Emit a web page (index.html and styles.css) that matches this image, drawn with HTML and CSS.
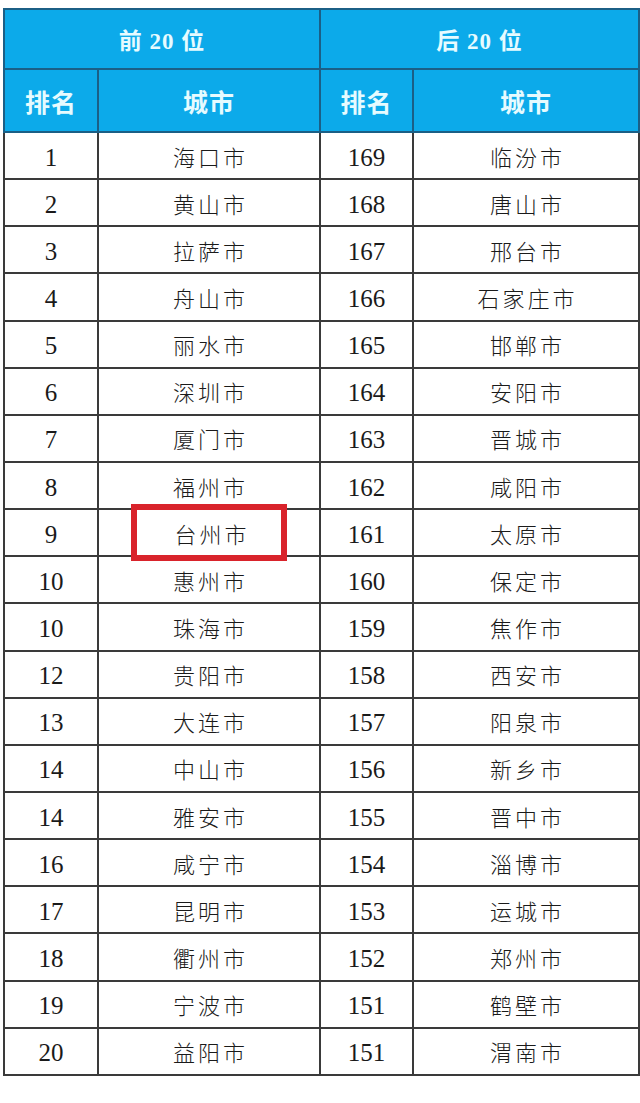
FILE: index.html
```html
<!DOCTYPE html>
<html lang="zh">
<head>
<meta charset="utf-8">
<link rel="stylesheet" href="styles.css">
</head>
<body>
<table class="rank">
  <colgroup>
    <col class="c-rank"><col class="c-city"><col class="c-rank2"><col class="c-city2">
  </colgroup>
  <thead>
    <tr class="h1"><th colspan="2">前 20 位</th><th colspan="2">后 20 位</th></tr>
    <tr class="h2"><th>排名</th><th>城市</th><th>排名</th><th>城市</th></tr>
  </thead>
  <tbody>
    <tr><td class="num">1</td><td class="city">海口市</td><td class="num">169</td><td class="city">临汾市</td></tr>
    <tr><td class="num">2</td><td class="city">黄山市</td><td class="num">168</td><td class="city">唐山市</td></tr>
    <tr><td class="num">3</td><td class="city">拉萨市</td><td class="num">167</td><td class="city">邢台市</td></tr>
    <tr><td class="num">4</td><td class="city">舟山市</td><td class="num">166</td><td class="city">石家庄市</td></tr>
    <tr><td class="num">5</td><td class="city">丽水市</td><td class="num">165</td><td class="city">邯郸市</td></tr>
    <tr><td class="num">6</td><td class="city">深圳市</td><td class="num">164</td><td class="city">安阳市</td></tr>
    <tr><td class="num">7</td><td class="city">厦门市</td><td class="num">163</td><td class="city">晋城市</td></tr>
    <tr><td class="num">8</td><td class="city">福州市</td><td class="num">162</td><td class="city">咸阳市</td></tr>
    <tr><td class="num">9</td><td class="city"><span class="mark">台州市</span></td><td class="num">161</td><td class="city">太原市</td></tr>
    <tr><td class="num">10</td><td class="city">惠州市</td><td class="num">160</td><td class="city">保定市</td></tr>
    <tr><td class="num">10</td><td class="city">珠海市</td><td class="num">159</td><td class="city">焦作市</td></tr>
    <tr><td class="num">12</td><td class="city">贵阳市</td><td class="num">158</td><td class="city">西安市</td></tr>
    <tr><td class="num">13</td><td class="city">大连市</td><td class="num">157</td><td class="city">阳泉市</td></tr>
    <tr><td class="num">14</td><td class="city">中山市</td><td class="num">156</td><td class="city">新乡市</td></tr>
    <tr><td class="num">14</td><td class="city">雅安市</td><td class="num">155</td><td class="city">晋中市</td></tr>
    <tr><td class="num">16</td><td class="city">咸宁市</td><td class="num">154</td><td class="city">淄博市</td></tr>
    <tr><td class="num">17</td><td class="city">昆明市</td><td class="num">153</td><td class="city">运城市</td></tr>
    <tr><td class="num">18</td><td class="city">衢州市</td><td class="num">152</td><td class="city">郑州市</td></tr>
    <tr><td class="num">19</td><td class="city">宁波市</td><td class="num">151</td><td class="city">鹤壁市</td></tr>
    <tr><td class="num">20</td><td class="city">益阳市</td><td class="num">151</td><td class="city">渭南市</td></tr>
  </tbody>
</table>
</body>
</html>
```
FILE: styles.css
```css
html, body {
  margin: 0;
  padding: 0;
  background: #ffffff;
}
body {
  padding: 8px 0 0 3px;
  font-family: "Liberation Serif", "Noto Sans CJK SC", serif;
}
.rank {
  border-collapse: collapse;
  table-layout: fixed;
  width: 635px;
}
.c-rank { width: 94px; }
.c-city { width: 222px; }
.c-rank2 { width: 93px; }
.c-city2 { width: 226px; }
.rank th {
  background: #0caaea;
  color: #e6fbff;
  font-family: "Liberation Serif", "Noto Sans CJK SC", serif;
  font-weight: bold;
  border: 2px solid #1b5f86;
  text-align: center;
  padding: 0;
}
.h1 th {
  height: 58px;
  font-size: 23px;
  letter-spacing: 1px;
}
.h2 th {
  height: 61px;
  font-size: 25px;
  letter-spacing: 1px;
}
.rank td {
  border: 2px solid #3a3a3a;
  height: 45.15px;
  padding: 0;
  text-align: center;
  color: #1a1a1a;
}
.rank td.num {
  font-family: "Liberation Serif", "Times New Roman", serif;
  font-size: 25px;
  padding-top: 4px;
  height: 41.15px;
}
.rank td.city {
  font-family: "Noto Sans CJK SC", sans-serif;
  font-weight: 300;
  font-size: 22px;
  letter-spacing: 3px;
  text-indent: 3px;
}
.mark {
  position: relative;
  display: inline-block;
}
.mark::after {
  content: "";
  position: absolute;
  left: -40px;
  right: -37px;
  top: -13px;
  bottom: -12px;
  border: 6px solid #d9232b;
}
```
